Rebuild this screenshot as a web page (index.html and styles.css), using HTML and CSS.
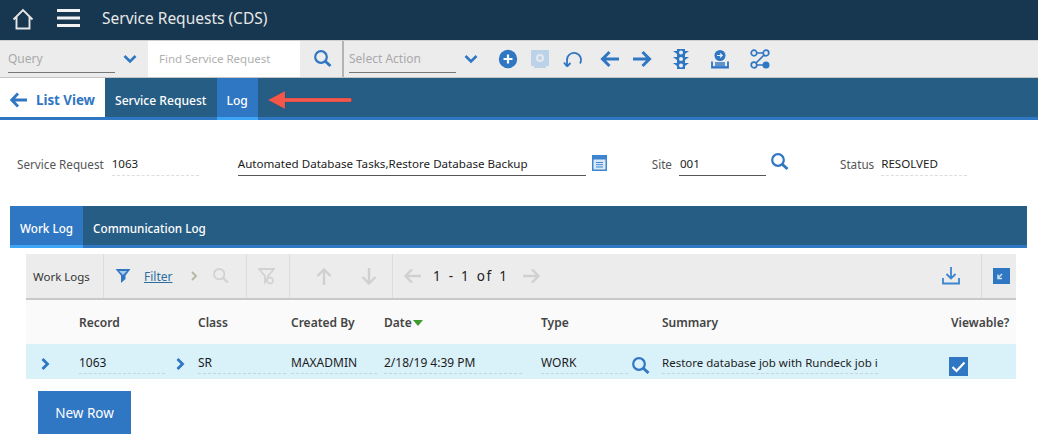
FILE: index.html
```html
<!DOCTYPE html>
<html lang="en">
<head>
<meta charset="utf-8">
<title>Service Requests (CDS)</title>
<link rel="stylesheet" href="styles.css">
</head>
<body>
<header class="appbar">
  <svg class="home" width="22" height="22" viewBox="0 0 22 22"><path d="M1.500 11.500 11 2l9.500 9.500M4.500 9v11.500h13V9" fill="none" stroke="#e6e6e6" stroke-width="1.900"/></svg>
  <svg class="menu" width="23" height="18" viewBox="0 0 23 18"><path d="M0 1.500h23M0 9h23M0 16.500h23" stroke="#f2f2f2" stroke-width="3"/></svg>
  <span class="apptitle">Service Requests (CDS)</span>
</header>
<div class="toolbar">
  <div class="select query"><span>Query</span></div>
  <svg class="chev first" width="14" height="10" viewBox="0 0 14 10"><path d="M1.500 2 7 7.500 12.500 2" fill="none" stroke="#2f76c3" stroke-width="2.600"/></svg>
  <div class="find">Find Service Request</div>
  <div class="findbtn">
    <svg width="20" height="20" viewBox="0 0 20 20"><circle cx="8" cy="8" r="5.800" fill="none" stroke="#2f76c3" stroke-width="2.200"/><path d="m12.500 12.500 5 4.500" stroke="#2f76c3" stroke-width="3"/></svg>
  </div>
  <div class="select action"><span>Select Action</span></div>
  <svg class="chev second" width="14" height="10" viewBox="0 0 14 10"><path d="M1.500 2 7 7.500 12.500 2" fill="none" stroke="#2f76c3" stroke-width="2.600"/></svg>
  <div class="actions">
    <svg width="20" height="20" viewBox="0 0 20 20"><circle cx="10" cy="10" r="9.200" fill="#2f76c3"/><path d="M10 5.500v9M5.500 10h9" stroke="#fff" stroke-width="2.200"/></svg>
    <svg width="20" height="20" viewBox="0 0 20 20"><path d="M1 1h18v16h-3v2H4v-2H1z" fill="#bcd2e8"/><circle cx="10" cy="9" r="3" fill="none" stroke="#e4e9ee" stroke-width="2"/></svg>
    <svg width="20" height="20" viewBox="0 0 20 20"><path d="M5 17.500 2 13.500M5 17.500l3.500-3.500M5 16.500V11a7 7 0 1 1 13 3.500" fill="none" stroke="#2f76c3" stroke-width="1.800"/></svg>
    <svg class="gap-m" width="20" height="18" viewBox="0 0 20 18"><path d="M9.500 2 2.500 9l7 7M3 9h16" fill="none" stroke="#2f76c3" stroke-width="3"/></svg>
    <svg width="20" height="18" viewBox="0 0 20 18"><path d="M10.500 2l7 7-7 7M17 9H1" fill="none" stroke="#2f76c3" stroke-width="3"/></svg>
    <svg class="gap-l" width="18" height="22" viewBox="0 0 18 22"><path d="M5 1h8v20H5z" fill="#2f76c3"/><path d="M1 3h4v3zM17 3h-4v3zM1 9h4v3zM17 9h-4v3zM1 15h4v3zM17 15h-4v3z" fill="#2f76c3"/><circle cx="9" cy="4.500" r="2" fill="#e8eef4"/><circle cx="9" cy="11" r="2" fill="#e8eef4"/><circle cx="9" cy="17.500" r="2" fill="#e8eef4"/></svg>
    <svg class="gap-l" width="20" height="20" viewBox="0 0 20 20"><circle cx="10" cy="6.500" r="5.500" fill="#2f76c3"/><path d="M7 6.500h5M10 4.500l2.200 2-2.200 2" fill="none" stroke="#e8eef4" stroke-width="1.100"/><path d="M2 12.500v6h16v-6" fill="none" stroke="#2f76c3" stroke-width="1.800"/><path d="M5 14h10M5 16h10M2 18h16" stroke="#2f76c3" stroke-width="1.500"/></svg>
    <svg class="gap-l" width="20" height="20" viewBox="0 0 20 20"><g fill="none" stroke="#2f76c3" stroke-width="1.700"><circle cx="4" cy="4" r="2.800"/><circle cx="16" cy="4" r="2.800"/><circle cx="4" cy="16" r="2.800"/><path d="M6.800 4h6.400M14 6l-8 8M6.800 16H14"/></g><circle cx="16" cy="16" r="3.500" fill="#2f76c3"/></svg>
  </div>
</div>
<nav class="mainnav">
  <a class="listview">
    <svg width="17" height="16" viewBox="0 0 17 16"><path d="M8 1.500 1.800 8 8 14.500M2.500 8H17" fill="none" stroke="#2f76c3" stroke-width="2.800"/></svg>
    <span>List View</span>
  </a>
  <a class="tab">Service Request</a>
  <a class="tab active">Log</a>
  <svg class="callout" width="86" height="22" viewBox="0 0 86 22"><path d="M1 11 18 2V9L84 9q1.500 2 0 4L18 13V20z" fill="#f4564a" stroke="#1c3b55" stroke-opacity=".25" stroke-width=".6"/></svg>
</nav>
<section class="form">
  <label class="lbl first">Service Request</label>
  <div class="val ro srid">1063</div>
  <div class="val desc">Automated Database Tasks,Restore Database Backup</div>
  <svg class="cal" width="15" height="16" viewBox="0 0 15 16"><path d="M0 0h15v16H0z" fill="#3d86cf"/><path d="M1.500 4.500h12V14.500h-12z" fill="#dbe9f6"/><path d="M4 7.500h7M4 9.700h7M4 12h7" stroke="#3d86cf"/></svg>
  <label class="lbl site">Site</label>
  <div class="val siteval">001</div>
  <svg class="lens" width="20" height="20" viewBox="0 0 20 20"><circle cx="8" cy="8" r="5.800" fill="none" stroke="#2f76c3" stroke-width="2.200"/><path d="m12.500 12.500 5 4.500" stroke="#2f76c3" stroke-width="3"/></svg>
  <label class="lbl status">Status</label>
  <div class="val ro statusval">RESOLVED</div>
</section>
<nav class="subnav">
  <a class="tab active">Work Log</a>
  <a class="tab">Communication Log</a>
</nav>
<section class="table">
  <div class="tabletools">
    <div class="tt title">Work Logs</div>
    <div class="tt filter">
      <svg class="funnel" width="16" height="16" viewBox="0 0 16 16"><path d="M.500 1h15L10.500 7.500V11L6 15V7.500z" fill="#2f76c3"/><path d="M4 3h8L8 7z" fill="#a9cbec"/></svg>
      <a class="filterlink">Filter</a>
      <svg class="next" width="7" height="10" viewBox="0 0 7 10"><path d="M1 1l4 4-4 4" fill="none" stroke="#b4b4a4" stroke-width="1.800"/></svg>
      <svg class="dimlens" width="18" height="18" viewBox="0 0 20 20"><circle cx="8" cy="8" r="5.800" fill="none" stroke="#d2d2d2" stroke-width="2"/><path d="m12.500 12.500 5 4.500" stroke="#d2d2d2" stroke-width="2.600"/></svg>
    </div>
    <div class="tt clear">
      <svg width="17" height="17" viewBox="0 0 17 17"><path d="M1 1h15L10 8v2l-3 4V8z" fill="none" stroke="#d2d2d2" stroke-width="1.800"/><circle cx="12" cy="12.500" r="3" fill="none" stroke="#d2d2d2" stroke-width="1.600"/></svg>
    </div>
    <div class="tt sort">
      <svg width="16" height="17" viewBox="0 0 16 17"><path d="M1.500 8 8 1.500 14.500 8M8 2v15" fill="none" stroke="#d0d0d0" stroke-width="2.400"/></svg>
      <svg width="16" height="17" viewBox="0 0 16 17"><path d="M1.500 9 8 15.500 14.500 9M8 15V0" fill="none" stroke="#d0d0d0" stroke-width="2.400"/></svg>
    </div>
    <div class="tt pager">
      <svg width="17" height="16" viewBox="0 0 17 16"><path d="M8 1.500 1.500 8 8 14.500M2 8h15" fill="none" stroke="#d0d0d0" stroke-width="2.400"/></svg>
      <span class="count">1 - 1 of 1</span>
      <svg width="17" height="16" viewBox="0 0 17 16"><path d="M9 1.500 15.500 8 9 14.500M15 8H0" fill="none" stroke="#d0d0d0" stroke-width="2.400"/></svg>
    </div>
    <div class="tt download">
      <svg width="18" height="18" viewBox="0 0 18 18"><path d="M9 0v11M4.500 7 9 11.500 13.500 7M1 11v5.500h16V11" fill="none" stroke="#3d86cf" stroke-width="1.800"/></svg>
    </div>
    <div class="tt collapse">
      <svg width="17" height="16" viewBox="0 0 17 16"><path d="M0 0h17v16H0z" fill="#2f76c3"/><path d="M9 6l-4 4M5 6.500V10.500H9" fill="none" stroke="#cfe2f4" stroke-width="1.500"/></svg>
    </div>
  </div>
  <div class="grid head">
    <span></span><span>Record</span><span>Class</span><span>Created By</span>
    <span class="sorted">Date<i class="tri"></i></span><span>Type</span><span>Summary</span><span>Viewable?</span>
  </div>
  <div class="grid row">
    <svg class="rowchev" width="9" height="12" viewBox="0 0 9 12"><path d="M1.500 1 6.500 6l-5 5" fill="none" stroke="#2f76c3" stroke-width="2.800"/></svg>
    <div class="cellgroup"><span class="cell record">1063</span><svg width="9" height="12" viewBox="0 0 9 12"><path d="M1.500 1 6.500 6l-5 5" fill="none" stroke="#2f76c3" stroke-width="2.800"/></svg></div>
    <div class="cell w88">SR</div>
    <div class="cell w86">MAXADMIN</div>
    <div class="cell w138">2/18/19 4:39 PM</div>
    <div class="cellgroup typegroup"><span class="cell type">WORK</span><svg width="20" height="20" viewBox="0 0 20 20"><circle cx="8" cy="8" r="5.800" fill="none" stroke="#2f76c3" stroke-width="2.200"/><path d="m12.500 12.500 5 4.500" stroke="#2f76c3" stroke-width="3"/></svg></div>
    <div class="cell summary">Restore database job with Rundeck job i</div>
    <div class="check"><svg width="19" height="19" viewBox="0 0 19 19"><path d="M0 0h19v19H0z" fill="#2f76c3"/><path d="M3.500 10 7.500 14 15.500 5.500" fill="none" stroke="#fff" stroke-width="2.200"/></svg></div>
  </div>
  <button class="newrow">New Row</button>
</section>
</body>
</html>
```
FILE: styles.css
```css
* { box-sizing: border-box; }
html, body { margin: 0; padding: 0; }
body {
  width: 1038px;
  height: 445px;
  overflow: hidden;
  background: #fff;
  font-family: "Noto Sans", "Open Sans", sans-serif;
  font-size: 12px;
  color: #1c1c1c;
}
svg { display: block; flex: none; }

.appbar {
  height: 40px;
  background: #17364f;
  display: flex;
  align-items: center;
  padding-left: 12px;
}
.home { margin-top: -3px; }
.menu { margin-left: 23px; margin-top: -4px; }
.apptitle { margin-left: 22px; margin-top: -4px; color: #e8e8e8; font-size: 15.500px; }

.toolbar {
  height: 38px;
  background: #ececec;
  border-top: 1px solid #cfcfcf;
  border-bottom: 1px solid #c4c4c4;
  display: flex;
  align-items: center;
}
.select {
  height: 100%;
  padding-top: 9px;
  color: #a9a9a9;
  font-size: 12px;
}
.select span {
  display: block;
  height: 23px;
  border-bottom: 1px solid #777;
}
.query { margin-left: 8px; width: 107px; }
.chev.first { margin-left: 8px; }
.find {
  margin-left: 11px;
  width: 152px;
  height: 36px;
  background: #fff;
  color: #b0b0b0;
  font-size: 11.500px;
  line-height: 36px;
  padding-left: 11px;
}
.findbtn {
  width: 44px;
  height: 36px;
  display: flex;
  align-items: center;
  padding-left: 13px;
  border-right: 2px solid #b4b4b4;
}
.action { margin-left: 5px; width: 107px; }
.chev.second { margin-left: 8px; }
.actions {
  margin-left: 20px;
  display: flex;
  align-items: center;
  gap: 12px;
}
.gap-m { margin-left: 6px; }
.gap-l { margin-left: 8px; }

.mainnav {
  height: 42px;
  background: #265d84;
  border-bottom: 3px solid #2f76c3;
  display: flex;
  align-items: stretch;
  color: #fff;
  font-size: 12.100px;
}
.mainnav .listview {
  width: 105px;
  background: #fff;
  color: #2f76c3;
  font-size: 13.300px;
  font-weight: 700;
  display: flex;
  align-items: center;
  gap: 9px;
  padding: 5px 0 0 10px;
}
.tab {
  display: flex;
  align-items: center;
  padding: 5px 10px 0;
  color: #fff;
  font-weight: 500;
}
.tab.active {
  background: #2f76c3;
  box-shadow: 0 3px 0 #3ea4f5;
}
.callout { align-self: center; margin: 4px 0 0 9px; }

.form {
  height: 86px;
  display: flex;
  align-items: flex-start;
  padding: 33px 0 0 17px;
}
.lbl { color: #555; font-size: 11.700px; line-height: 23px; }
.val {
  height: 23px;
  line-height: 21px;
  font-size: 11.600px;
  border-bottom: 1px solid #555;
  color: #1c1c1c;
}
.val.ro { border-bottom: 1px dashed #ddd; }
.srid { margin-left: 8px; width: 87px; }
.desc { margin-left: 39px; width: 348px; }
.cal { margin: 2px 0 0 6px; }
.lbl.site { margin-left: 45px; }
.siteval { margin-left: 7px; width: 87px; padding-left: 1px; }
.lens { margin: -1px 0 0 4px; }
.lbl.status { margin-left: 50px; }
.statusval { margin-left: 7px; width: 86px; }

.subnav {
  height: 42px;
  margin: 0 11px 0 10px;
  background: #265d84;
  border-bottom: 3px solid #2f76c3;
  display: flex;
  align-items: stretch;
  font-size: 11.700px;
}

.table { margin: 6px 22px 0 26px; }
.tabletools {
  height: 46px;
  background: #ececec;
  border-bottom: 2px solid #c8c8c8;
  display: flex;
  align-items: stretch;
}
.tt {
  display: flex;
  align-items: center;
  border-right: 1px solid #dcdcdc;
}
.title { width: 78px; padding-left: 7px; color: #333; font-size: 11.500px; }
.filter { width: 143px; padding-left: 11px; }
.filterlink {
  margin-left: 13px;
  color: #2c6f9e;
  text-decoration: underline;
  font-size: 12px;
}
.next { margin-left: 19px; }
.dimlens { margin-left: 14px; }
.clear { width: 43px; padding-left: 11px; }
.sort { width: 103px; padding-left: 26px; gap: 29px; }
.pager { flex: 1; padding-left: 11px; border: 0; }
.count { margin: 0 15px 0 12px; font-size: 13.500px; letter-spacing: 1.500px; word-spacing: 1.500px; color: #222; }
.download { width: 40px; }
.collapse { width: 34px; border: 0; padding-left: 11px; }

.grid {
  display: grid;
  grid-template-columns: 53px 119px 93px 93px 157px 121px 289px 65px;
  align-items: center;
}
.head {
  height: 44px;
  background: #fafafa;
  color: #444;
  font-weight: 600;
  font-size: 12px;
}
.sorted { display: flex; align-items: center; gap: 1px; }
.tri {
  width: 0;
  height: 0;
  border-left: 5px solid transparent;
  border-right: 5px solid transparent;
  border-top: 6px solid #3d9a2e;
  margin-top: 1px;
}
.row {
  height: 35px;
  background: #d9f2fa;
  font-size: 12px;
  align-items: start;
}
.rowchev { margin: 14px 0 0 15px; }
.cellgroup { display: flex; align-items: flex-start; }
.cellgroup svg { margin: 14px 0 0 11px; }
.cell {
  display: block;
  height: 30px;
  padding-top: 9px;
  line-height: 20px;
  border-bottom: 1px dashed #c3d6dd;
  color: #1c1c1c;
  white-space: nowrap;
}
.record { width: 86px; }
.w88 { width: 88px; }
.w86 { width: 86px; }
.w138 { width: 138px; }
.type { width: 87px; }
.typegroup svg { margin: 12px 0 0 3px; }
.summary { width: 216px; font-size: 11.500px; }
.check { padding-top: 13px; margin-left: -2px; }

.newrow {
  display: block;
  margin: 12px 0 0 12px;
  width: 93px;
  height: 43px;
  background: #2f76c3;
  border: 0;
  color: #fff;
  font-family: inherit;
  font-size: 13.500px;
}
```
